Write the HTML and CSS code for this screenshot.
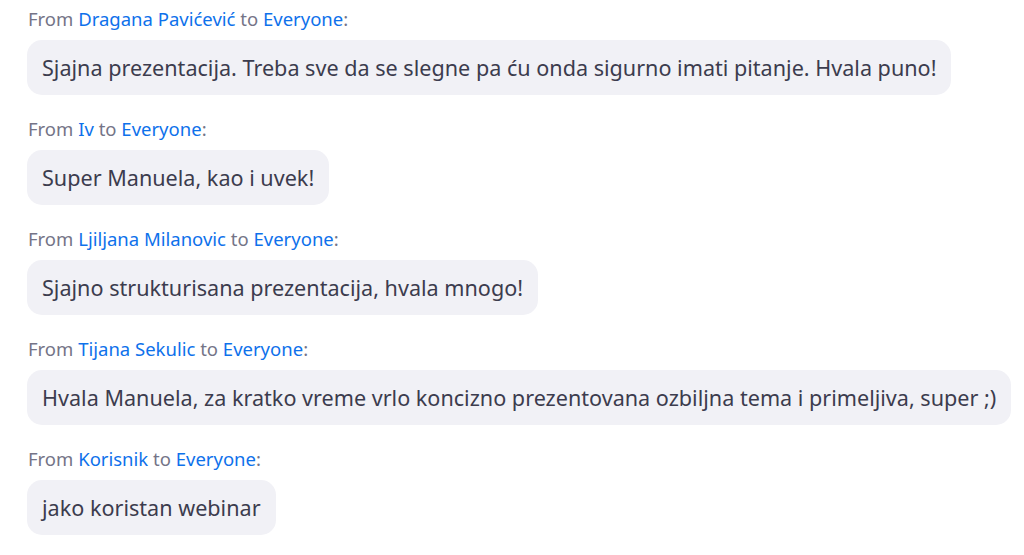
FILE: index.html
```html
<!DOCTYPE html>
<html>
<head>
<meta charset="utf-8">
<link rel="stylesheet" href="styles.css">
</head>
<body>
<div class="chat">
  <div class="msg">
    <div class="meta">From <span class="who">Dragana Pavićević</span> to <span class="who">Everyone</span>:</div>
    <div class="bubble">Sjajna prezentacija. Treba sve da se slegne pa ću onda sigurno imati pitanje. Hvala puno!</div>
  </div>
  <div class="msg">
    <div class="meta">From <span class="who">Iv</span> to <span class="who">Everyone</span>:</div>
    <div class="bubble">Super Manuela, kao i uvek!</div>
  </div>
  <div class="msg">
    <div class="meta">From <span class="who">Ljiljana Milanovic</span> to <span class="who">Everyone</span>:</div>
    <div class="bubble">Sjajno strukturisana prezentacija, hvala mnogo!</div>
  </div>
  <div class="msg">
    <div class="meta">From <span class="who">Tijana Sekulic</span> to <span class="who">Everyone</span>:</div>
    <div class="bubble">Hvala Manuela, za kratko vreme vrlo koncizno prezentovana ozbiljna tema i primeljiva, super ;)</div>
  </div>
  <div class="msg">
    <div class="meta">From <span class="who">Korisnik</span> to <span class="who">Everyone</span>:</div>
    <div class="bubble">jako koristan webinar</div>
  </div>
</div>
</body>
</html>
```

FILE: styles.css
```css
html, body {
  margin: 0;
  padding: 0;
  background: #ffffff;
}
body {
  font-family: "Noto Sans", "Open Sans", sans-serif;
}
.chat {
  display: flex;
  flex-direction: column;
  gap: 23px;
  padding: 8px 0 0 27px;
}
.msg {
  display: flex;
  flex-direction: column;
  align-items: flex-start;
  gap: 10px;
}
.meta {
  font-size: 18.5px;
  line-height: 22px;
  color: #747487;
  padding-left: 1px;
}
.who {
  color: #0e71eb;
}
.bubble {
  background: #f1f1f6;
  border-radius: 15px;
  padding: 13px 15px;
  font-size: 21.6px;
  line-height: 29px;
  color: #3c3c4e;
  white-space: nowrap;
}
```
